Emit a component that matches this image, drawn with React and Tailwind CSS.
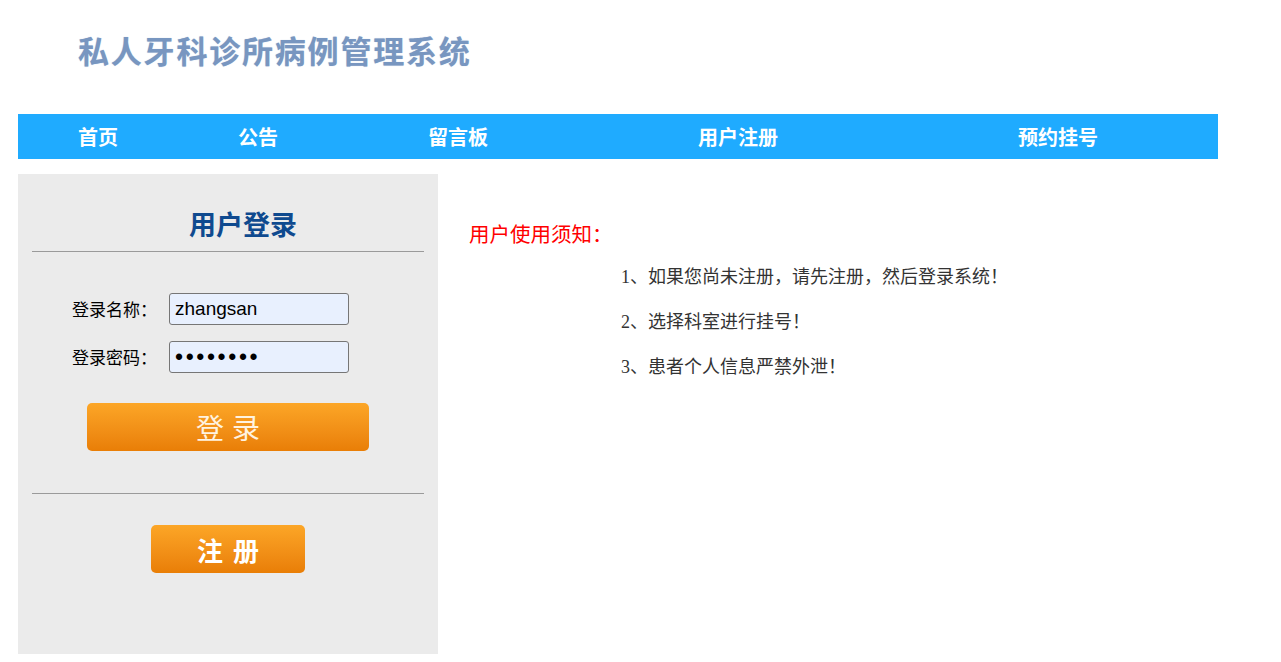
const PUNCT = "、，！：";

function FW({ text }) {
  const parts = [];
  let buf = "";
  Array.from(text).forEach((ch, i) => {
    if (PUNCT.includes(ch)) {
      if (buf) parts.push(<span key={"t" + i}>{buf}</span>);
      buf = "";
      const align = ch === "、" || ch === "，" ? "text-left" : "text-center";
      parts.push(
        <span key={"p" + i} className={`inline-block w-[1em] ${align}`}>
          {ch}
        </span>
      );
    } else {
      buf += ch;
    }
  });
  if (buf) parts.push(<span key="end">{buf}</span>);
  return <>{parts}</>;
}

export default function App() {
  const navItems = [
    { t: "首页", w: "w-[160px]" },
    { t: "公告", w: "w-[160px]" },
    { t: "留言板", w: "w-[240px]" },
    { t: "用户注册", w: "w-[320px]" },
    { t: "预约挂号", w: "w-[320px]" },
  ];
  const sans = { fontFamily: '"Noto Sans CJK SC", "Noto Sans", sans-serif' };
  return (
    <div className="w-[1281px] h-[662px] bg-white overflow-hidden" style={sans}>
      <div className="h-[114px] pl-[78px] pt-[30px]">
        <div
          className="text-[31px] leading-[40px] font-bold text-[#7896c0] tracking-[1.8px]"
          style={{ textShadow: "0 0 1px #b6c8e2" }}
        >
          私人牙科诊所病例管理系统
        </div>
      </div>
      <div className="ml-[18px] w-[1200px] h-[45px] bg-[#1fabff] flex">
        {navItems.map((n) => (
          <div key={n.t} className={`${n.w} flex items-center justify-center text-white text-[20px] font-bold`}>
            {n.t}
          </div>
        ))}
      </div>
      <div className="flex mt-[15px] ml-[18px]">
        <div className="w-[420px] h-[480px] bg-[#ebebeb] px-[14px] flex flex-col">
          <div className="pt-[31px] pl-[30px] h-[78px] border-b border-[#9a9a9a] text-center text-[27px] leading-[38px] font-bold text-[#0f4a8f]">
            用户登录
          </div>
          <div className="pt-[41px] pl-[40px] flex flex-col gap-[16px]">
            <div className="flex items-center">
              <span className="w-[97px] text-[17px] text-black">
                <FW text="登录名称：" />
              </span>
              <div
                className="w-[180px] h-[32px] rounded-[3px] border border-[#767676] bg-[#e8f0fe] flex items-center px-[5px] text-[19px] text-black"
                style={{ fontFamily: "Arimo, 'Liberation Sans', Arial, sans-serif" }}
              >
                zhangsan
              </div>
            </div>
            <div className="flex items-center">
              <span className="w-[97px] text-[17px] text-black">
                <FW text="登录密码：" />
              </span>
              <div
                className="w-[180px] h-[32px] rounded-[3px] border border-[#767676] bg-[#e8f0fe] flex items-center px-[5px] text-[23px] text-black tracking-[2.6px]"
                style={{ fontFamily: "'Liberation Sans', sans-serif" }}
              >
                ••••••••
              </div>
            </div>
          </div>
          <div className="pl-[55px] pt-[30px]">
            <div className="w-[282px] h-[48px] rounded-[5px] bg-gradient-to-b from-[#fca626] to-[#e97e06] flex items-center justify-center text-[#fff3e0] text-[28px] tracking-[8px] pl-[8px]">
              登录
            </div>
          </div>
          <div className="mt-[42px] border-t border-[#9a9a9a]"></div>
          <div className="pl-[119px] pt-[31px]">
            <div className="w-[154px] h-[48px] rounded-[5px] bg-gradient-to-b from-[#fca626] to-[#e97e06] flex items-center justify-center text-white text-[26px] font-bold tracking-[10px] pl-[10px]">
              注册
            </div>
          </div>
        </div>
        <div className="pl-[31px] pt-[46px]" style={{ fontFamily: '"Liberation Serif", "Noto Sans CJK SC", serif' }}>
          <div className="text-[20.5px] leading-[30px] text-[#ff0000]">
            <FW text="用户使用须知：" />
          </div>
          <div className="pl-[152px] pt-[15px] flex flex-col gap-[20px] text-[18px] leading-[25px] text-[#333333]">
            <div>
              <FW text="1、如果您尚未注册，请先注册，然后登录系统！" />
            </div>
            <div>
              <FW text="2、选择科室进行挂号！" />
            </div>
            <div>
              <FW text="3、患者个人信息严禁外泄！" />
            </div>
          </div>
        </div>
      </div>
    </div>
  );
}
